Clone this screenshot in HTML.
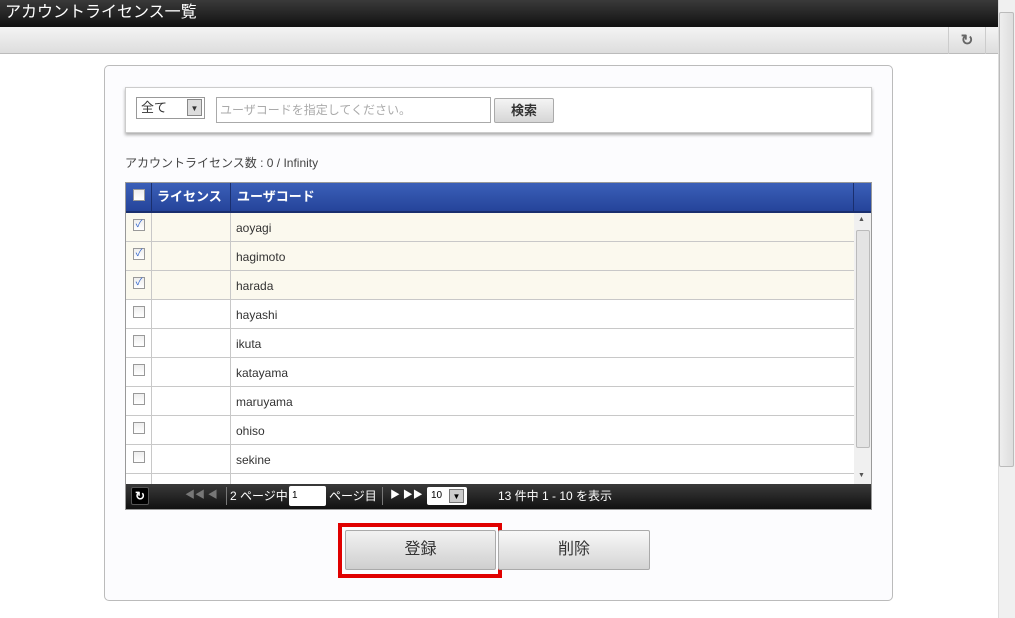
<!DOCTYPE html><html><head><meta charset="utf-8"><style>
*{box-sizing:border-box;margin:0;padding:0}
body{width:1015px;height:618px;position:relative;overflow:hidden;background:#fff;font-family:"Liberation Sans","Noto Sans CJK JP",sans-serif;font-size:12px;color:#333}
.a{position:absolute;line-height:1.2}
.cb{position:absolute;width:12px;height:12px;border:1px solid #999;background:linear-gradient(#eee,#fff)}
.row{position:absolute;left:126px;width:728px;height:29px;border-bottom:1px solid #c8c8c8}
.row .c1{position:absolute;left:25px;top:0;height:29px;border-left:1px solid #c8c8c8}
.row .c2{position:absolute;left:104px;top:0;height:29px;border-left:1px solid #c8c8c8}
.row span{position:absolute;left:110px;top:8px;font-size:12px;color:#333}
</style></head><body>
<div class="a" style="left:0;top:0;width:998px;height:27px;background:linear-gradient(#3a3a3a,#111);color:#fff;font-size:16px;padding:0 0 0 5px;line-height:26px">アカウントライセンス一覧</div>
<div class="a" style="left:0;top:27px;width:998px;height:27px;background:linear-gradient(#f4f4f4,#ddd);border-bottom:1px solid #bbb"></div>
<div class="a" style="left:948px;top:27px;width:38px;height:27px;border-left:1px solid #ccc;border-right:1px solid #ccc;text-align:center;font-weight:bold;color:#666;font-size:15px;line-height:27px">↻</div>
<div class="a" style="left:998px;top:0;width:17px;height:618px;background:#f0f0f0;border-left:1px solid #ddd"></div>
<div class="a" style="left:999px;top:12px;width:15px;height:455px;background:linear-gradient(90deg,#eee,#ddd);border:1px solid #bbb;border-radius:2px"></div>
<div class="a" style="left:104px;top:65px;width:789px;height:536px;border:1px solid #bbb;border-radius:5px;background:#fcfcfe"></div>
<div class="a" style="left:125px;top:87px;width:747px;height:46px;border:1px solid #ccc;background:#fff;box-shadow:0 2px 3px #aaa"></div>
<div class="a" style="left:136px;top:97px;width:69px;height:22px;border:1px solid #999;background:#fff;padding:0 4px;font-size:13px;line-height:20px">全て</div>
<div class="a" style="left:187px;top:99px;width:15px;height:17px;border:1px solid #888;background:#ddd;font-size:8px;text-align:center;line-height:17px">▼</div>
<div class="a" style="left:216px;top:97px;width:275px;height:26px;border:1px solid #aaa;color:#aaa;padding:0 3px;font-size:12px;line-height:24px">ユーザコードを指定してください。</div>
<div class="a" style="left:494px;top:98px;width:60px;height:25px;border:1px solid #aaa;border-radius:2px;background:linear-gradient(#f4f4f4,#d6d6d6);text-align:center;line-height:23px;font-weight:bold;font-size:13px">検索</div>
<div class="a" style="left:125px;top:156px;font-size:12px;color:#444">アカウントライセンス数 : 0 / Infinity</div>
<div class="a" style="left:125px;top:182px;width:747px;height:328px;border:1px solid #999;background:#fff"></div>
<div class="a" style="left:126px;top:183px;width:745px;height:30px;background:linear-gradient(#3b5fb8,#25449a);border-bottom:2px solid #1a2f6e"></div>
<div class="a" style="left:151px;top:183px;width:1px;height:29px;background:#1a2f6e"></div>
<div class="a" style="left:230px;top:183px;width:1px;height:29px;background:#1a2f6e"></div>
<div class="a" style="left:853px;top:183px;width:1px;height:29px;background:#1a2f6e"></div>
<div class="cb" style="left:133px;top:189px"></div>
<div class="a" style="left:157px;top:189px;color:#fff;font-weight:bold;font-size:13px">ライセンス</div>
<div class="a" style="left:237px;top:189px;color:#fff;font-weight:bold;font-size:13px">ユーザコード</div>
<div class="a" style="left:126px;top:213px;width:728px;height:271px;overflow:hidden">
<div style="position:relative;left:-126px;top:-213px">
<div class="row" style="top:213px;background:#fbf9ee"><div class="c1"></div><div class="c2"></div><span>aoyagi</span></div>
<div class="row" style="top:242px;background:#fbf9ee"><div class="c1"></div><div class="c2"></div><span>hagimoto</span></div>
<div class="row" style="top:271px;background:#fbf9ee"><div class="c1"></div><div class="c2"></div><span>harada</span></div>
<div class="row" style="top:300px"><div class="c1"></div><div class="c2"></div><span>hayashi</span></div>
<div class="row" style="top:329px"><div class="c1"></div><div class="c2"></div><span>ikuta</span></div>
<div class="row" style="top:358px"><div class="c1"></div><div class="c2"></div><span>katayama</span></div>
<div class="row" style="top:387px"><div class="c1"></div><div class="c2"></div><span>maruyama</span></div>
<div class="row" style="top:416px"><div class="c1"></div><div class="c2"></div><span>ohiso</span></div>
<div class="row" style="top:445px"><div class="c1"></div><div class="c2"></div><span>sekine</span></div>
<div class="row" style="top:474px"><div class="c1"></div><div class="c2"></div></div>
</div></div>
<div class="cb" style="left:133px;top:219px;color:#36c;font-size:10px;line-height:10px;text-align:center">✓</div>
<div class="cb" style="left:133px;top:248px;color:#36c;font-size:10px;line-height:10px;text-align:center">✓</div>
<div class="cb" style="left:133px;top:277px;color:#36c;font-size:10px;line-height:10px;text-align:center">✓</div>
<div class="cb" style="left:133px;top:306px"></div><div class="cb" style="left:133px;top:335px"></div><div class="cb" style="left:133px;top:364px"></div><div class="cb" style="left:133px;top:393px"></div><div class="cb" style="left:133px;top:422px"></div><div class="cb" style="left:133px;top:451px"></div>
<div class="a" style="left:854px;top:213px;width:17px;height:271px;background:#f0f0f0"></div>
<div class="a" style="left:856px;top:230px;width:14px;height:218px;background:#e4e4e4;border:1px solid #bbb;border-radius:2px"></div>
<div class="a" style="left:858px;top:216px;font-size:7px;color:#555">▲</div>
<div class="a" style="left:858px;top:472px;font-size:7px;color:#555">▼</div>
<div class="a" style="left:126px;top:484px;width:745px;height:25px;background:linear-gradient(#3a3a3a,#111);color:#fff;font-size:12px"></div>
<div class="a" style="left:131px;top:487px;width:18px;height:18px;background:#000;border:1px solid #555;border-radius:2px;color:#fff;font-weight:bold;text-align:center;line-height:17px">↻</div>
<div class="a" style="left:185px;top:490px;color:#777;font-size:10px">◀◀ ◀</div>
<div class="a" style="left:226px;top:487px;width:1px;height:18px;background:#777"></div>
<div class="a" style="left:230px;top:489px;color:#fff">2 ページ中</div>
<div class="a" style="left:289px;top:486px;width:37px;height:20px;background:#fff;border-radius:2px;color:#000;font-size:10px;padding:4px 3px">1</div>
<div class="a" style="left:329px;top:489px;color:#fff">ページ目</div>
<div class="a" style="left:382px;top:487px;width:1px;height:18px;background:#777"></div>
<div class="a" style="left:390px;top:490px;color:#fff;font-size:10px">▶ ▶▶</div>
<div class="a" style="left:427px;top:487px;width:40px;height:18px;background:#fff;border-radius:2px;color:#000;font-size:10px;padding:3px 4px">10</div>
<div class="a" style="left:449px;top:489px;width:15px;height:14px;background:#ccc;border:1px solid #777;font-size:8px;color:#000;text-align:center;line-height:13px">▼</div>
<div class="a" style="left:498px;top:489px;color:#fff">13 件中 1 - 10 を表示</div>
<div class="a" style="left:338px;top:523px;width:164px;height:55px;border:4px solid #e00000"></div>
<div class="a" style="left:345px;top:530px;width:151px;height:40px;border:1px solid #aaa;border-radius:2px;background:linear-gradient(#f2f2f2,#cfcfcf);text-align:center;line-height:38px;font-size:16px">登録</div>
<div class="a" style="left:498px;top:530px;width:152px;height:40px;border:1px solid #aaa;border-radius:2px;background:linear-gradient(#f8f8f8,#d4d4d4);text-align:center;line-height:38px;font-size:16px">削除</div>
</body></html>
